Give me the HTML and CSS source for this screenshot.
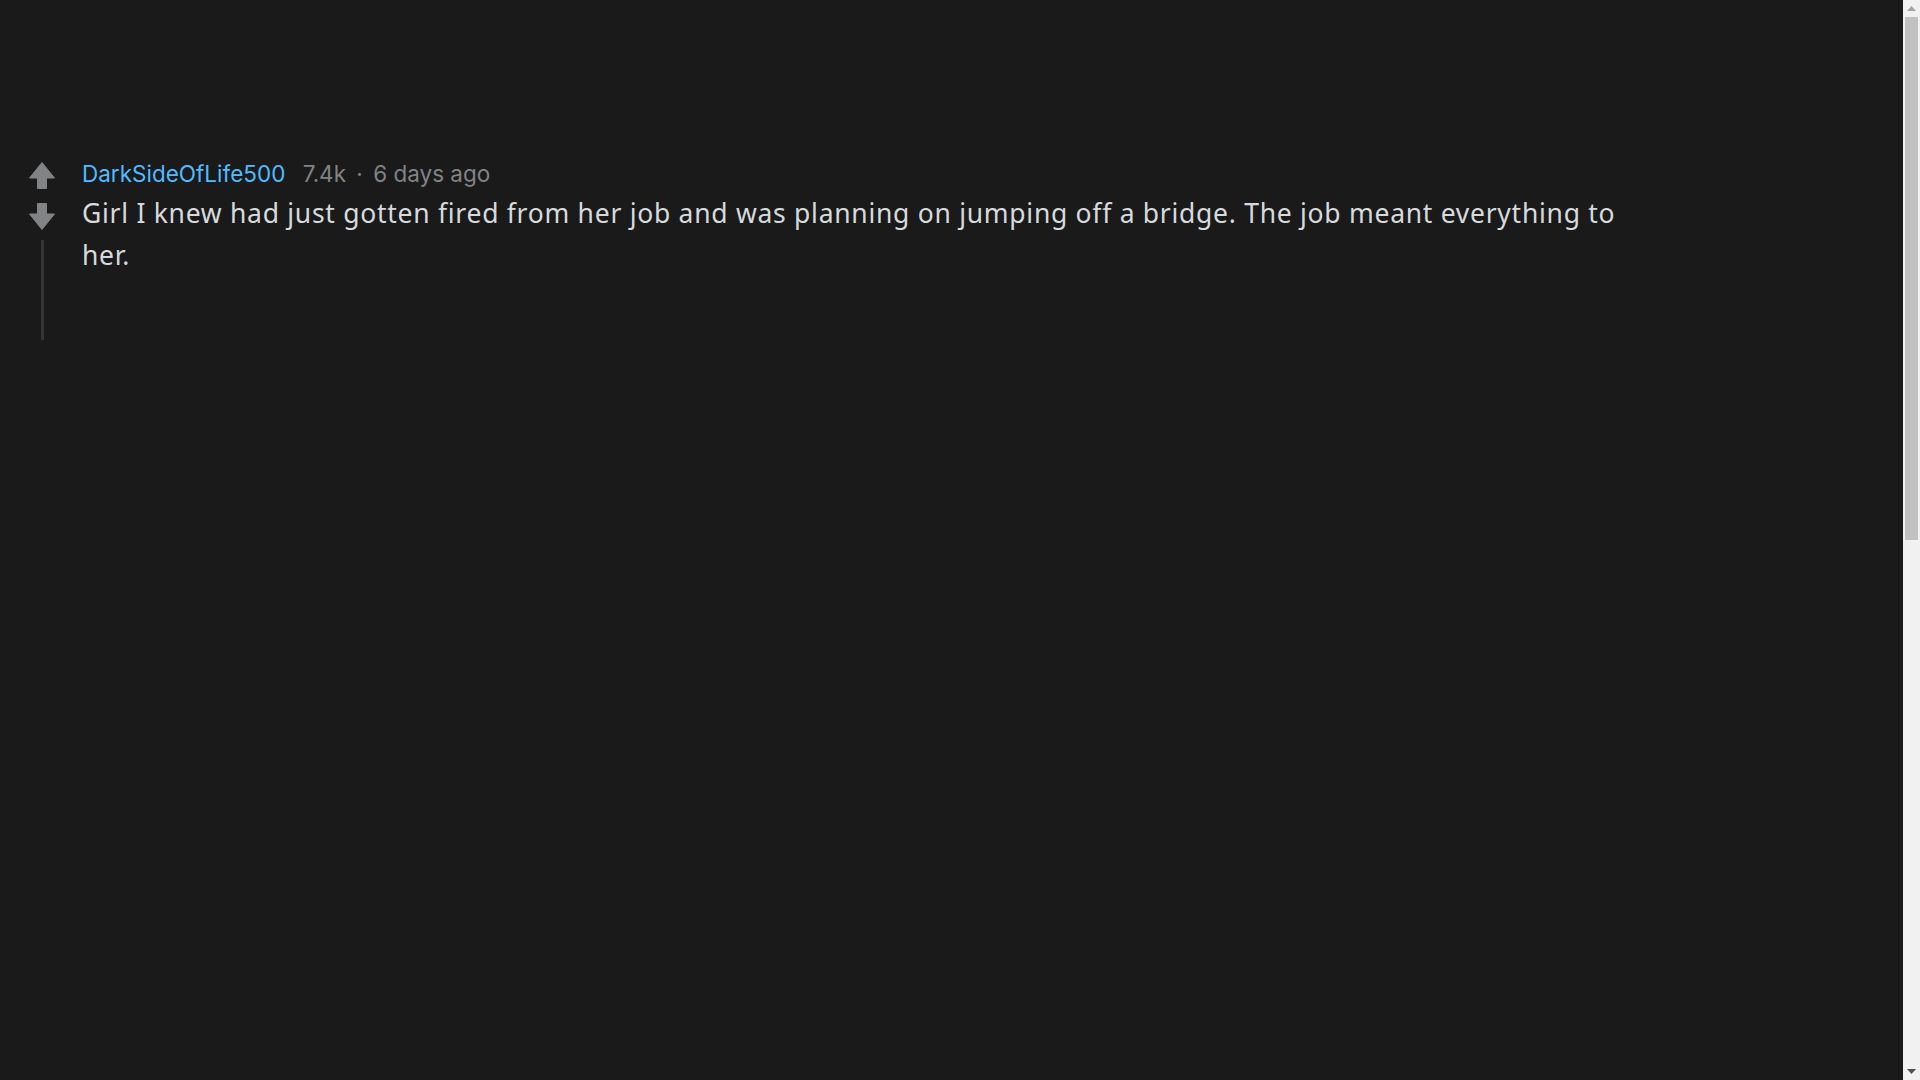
FILE: index.html
```html
<!DOCTYPE html>
<html lang="en">
<head>
<meta charset="utf-8">
<title>Comment</title>
<link rel="stylesheet" href="styles.css">
</head>
<body>
<div class="window">
  <main class="page">
    <article class="comment">
      <div class="vote">
        <button class="vote-btn" aria-label="upvote">
          <svg width="26" height="27" viewBox="0 0 26 27"><path d="M13 0.5 L25.5 16 H17.5 V26.5 H8.5 V16 H0.5 Z" fill="#818384" stroke="#818384" stroke-width="1" stroke-linejoin="round"/></svg>
        </button>
        <button class="vote-btn down" aria-label="downvote">
          <svg width="26" height="27" viewBox="0 0 26 27"><path d="M13 26.5 L25.5 11 H17.5 V0.5 H8.5 V11 H0.5 Z" fill="#818384" stroke="#818384" stroke-width="1" stroke-linejoin="round"/></svg>
        </button>
        <div class="thread-line"></div>
      </div>
      <div class="content">
        <div class="meta">
          <a class="author" href="#">DarkSideOfLife500</a>
          <span class="score">7.4k</span>
          <span class="dot">·</span>
          <span class="time">6 days ago</span>
        </div>
        <p class="text">Girl I knew had just gotten fired from her job and was planning on jumping off a bridge. The job meant everything to her.</p>
      </div>
    </article>
  </main>
  <div class="scrollbar" aria-hidden="true">
    <div class="sb-btn">
      <svg width="9" height="5" viewBox="0 0 9 5"><path d="M4.5 0 L9 5 H0 Z" fill="#a3a3a3"/></svg>
    </div>
    <div class="sb-track">
      <div class="sb-thumb"></div>
    </div>
    <div class="sb-btn">
      <svg width="9" height="5" viewBox="0 0 9 5"><path d="M0 0 H9 L4.5 5 Z" fill="#505050"/></svg>
    </div>
  </div>
</div>
</body>
</html>
```

FILE: styles.css
```css
html, body {
  margin: 0;
  height: 100%;
  overflow: hidden;
  background: #1a1a1b;
}
body {
  font-family: "Noto Sans", "Open Sans", sans-serif;
}
.window {
  display: flex;
  height: 100vh;
}
.page {
  flex: 1;
  padding: 156px 0 0 24px;
}
.comment {
  display: flex;
  gap: 22px;
}
.vote {
  width: 36px;
  display: flex;
  flex-direction: column;
  align-items: center;
  padding-top: 6px;
}
.vote-btn {
  background: none;
  border: 0;
  padding: 0;
  margin: 0;
  width: 26px;
  height: 27px;
  display: block;
  cursor: pointer;
}
.vote-btn svg {
  display: block;
}
.vote-btn.down {
  margin-top: 14px;
}
.thread-line {
  width: 3px;
  height: 100px;
  margin-top: 10px;
  background: #343536;
}
.content {
  width: 1545px;
}
.meta {
  font-family: Inter, "Noto Sans", sans-serif;
  font-size: 22.5px;
  line-height: 36px;
  height: 36px;
  color: #818384;
  white-space: nowrap;
}
.author {
  color: #4fbcff;
  text-decoration: none;
  margin-right: 11px;
}
.dot {
  margin: 0 4px;
}
.text {
  margin: 0;
  font-size: 26.5px;
  letter-spacing: 0.72px;
  line-height: 42px;
  color: #d7dadc;
}
.scrollbar {
  width: 17px;
  background: #f1f1f1;
  display: flex;
  flex-direction: column;
}
.sb-btn {
  height: 17px;
  display: flex;
  align-items: center;
  justify-content: center;
}
.sb-btn svg {
  display: block;
}
.sb-track {
  flex: 1;
  padding: 0 2px;
}
.sb-thumb {
  height: 523px;
  background: #c1c1c1;
}
```
